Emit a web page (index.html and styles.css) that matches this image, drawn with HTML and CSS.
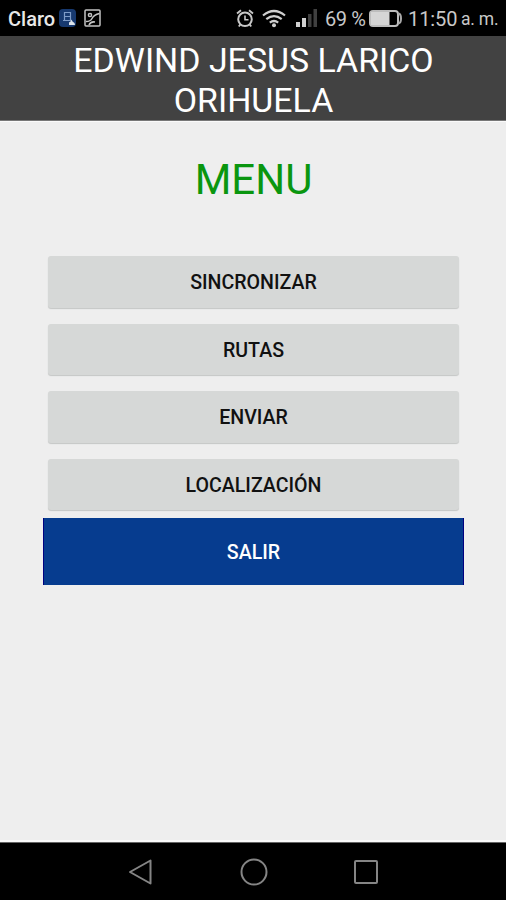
FILE: index.html
```html
<!DOCTYPE html>
<html lang="es">
<head>
<meta charset="utf-8">
<title>Menu</title>
<link rel="stylesheet" href="styles.css">
</head>
<body>
<div class="status">
  <span class="carrier">Claro</span>
  <svg class="app" width="17" height="18" viewBox="0 0 17 18"><rect width="17" height="18" rx="4" fill="#17396f"/><path d="M5.500 3.500h6v8h-6zM5.500 7.500h6M4 11.500h6" fill="none" stroke="#7f9cc8" stroke-width="1.200"/><path d="M10 16v-2.500l1.500-1 1-2 1 2 2 1.500.5 2z" fill="#dce3ea"/></svg>
  <svg class="photo" width="17" height="18" viewBox="0 0 17 18" fill="none" stroke="#c4c4c4" stroke-width="1.500"><rect x="1" y="1" width="15" height="16" rx="1"/><circle cx="6" cy="6" r="1.600"/><path d="M2 12.500C5 12.500 7 11.500 8 9.500S11 5.500 15.500 4.500M5 16c1-2.500 3-3.500 6-3"/></svg>
  <span class="space"></span>
  <svg class="alarm" width="18" height="19" viewBox="0 0 18 19" fill="none" stroke="#c8c8c8"><circle cx="9" cy="10.300" r="6.800" stroke-width="2"/><path d="M9 6.500v4.300h3.500" stroke-width="1.600"/><path d="M1 4.500 5 1.300M13 1.300l4 3.200M4.300 15.500l-1.500 2M13.700 15.500l1.500 2" stroke-width="1.900"/></svg>
  <svg class="wifi" width="24" height="19" viewBox="0 0 24 19" fill="none" stroke="#cfcfcf" stroke-width="2.200"><path d="M1 6.500Q12-2.500 23 6.500M4.300 10.200q7.700-6.200 15.400 0M7.800 13.600q4.200-3.200 8.400 0"/><circle cx="12" cy="16.300" r="2" fill="#cfcfcf" stroke="none"/></svg>
  <svg class="signal" width="22" height="19" viewBox="0 0 22 19"><path d="M0 13h4v5H0zM6 9h4v9H6z" fill="#d0d0d0"/><path d="M12 5h3.500v13H12zM17.500 0H21v18h-3.500z" fill="#404040"/></svg>
  <span class="percent">69 %</span>
  <svg class="battery" width="33" height="17" viewBox="0 0 33 17"><rect x="1" y="1" width="28" height="15" rx="3" fill="none" stroke="#bdbdbd" stroke-width="2"/><path d="M2 2h18.500v13H2z" fill="#d5d5d5"/><path d="M29.500 3.500q2.500.5 2.500 5t-2.500 5" fill="none" stroke="#a8a8a8" stroke-width="2"/></svg>
  <span class="time">11:50</span><span class="ampm">a. m.</span>
</div>
<header class="title">EDWIND JESUS LARICO<br>ORIHUELA</header>
<main class="content">
  <h1 class="heading">MENU</h1>
  <div class="actions">
    <button class="btn">SINCRONIZAR</button>
    <button class="btn">RUTAS</button>
    <button class="btn">ENVIAR</button>
    <button class="btn">LOCALIZACIÓN</button>
  </div>
  <button class="exit">SALIR</button>
</main>
<nav class="nav">
  <svg width="28" height="28" viewBox="0 0 28 28"><path d="M3 14 23.500 2.500v23z"/></svg>
  <svg width="28" height="28" viewBox="0 0 28 28"><circle cx="14" cy="14" r="12.500"/></svg>
  <svg width="28" height="28" viewBox="0 0 28 28"><rect x="3" y="3" width="22" height="22" rx="1"/></svg>
</nav>
</body>
</html>
```
FILE: styles.css
```css
* { box-sizing: border-box; }
body {
  margin: 0;
  width: 506px;
  height: 900px;
  display: flex;
  flex-direction: column;
  overflow: hidden;
  background: #eee;
  font-family: Roboto, "Liberation Sans", sans-serif;
}
.status {
  height: 36px;
  flex: none;
  display: flex;
  align-items: center;
  padding: 0 8px;
  background: #000;
  color: #c8c8c8;
  font-size: 20px;
  line-height: 24px;
  white-space: nowrap;
}
.status svg { flex: none; display: block; }
.carrier { width: 51px; padding-top: 2px; color: #e8e8e8; font-weight: 500; }
.photo { margin-left: 8px; }
.space { flex: 1; }
.alarm { margin-right: 8px; }
.wifi { margin-right: 10px; }
.signal { margin-right: 7px; }
.percent { width: 44px; padding-top: 2px; letter-spacing: -.4px; }
.battery { margin-right: 6px; }
.time { width: 49px; padding-top: 2px; letter-spacing: -.1px; }
.ampm { width: 37px; margin-left: 4px; padding-top: 2px; font-size: 17.500px; letter-spacing: -.2px; }
.title {
  height: 85px;
  flex: none;
  padding: 5px 0 0 1px;
  background: #424242;
  border-bottom: 1px solid #777;
  color: #fff;
  font-size: 33.900px;
  line-height: 40px;
  text-align: center;
}
.content {
  flex: 1;
  padding: 33px 42px 0 43px;
  border-top: 1px solid #fafafa;
  border-bottom: 2px solid #fafafa;
}
.heading {
  margin: 0;
  height: 101px;
  color: #0a960f;
  font-size: 42px;
  font-weight: 400;
  line-height: 50px;
  text-align: center;
}
.actions {
  display: flex;
  flex-direction: column;
  gap: 16px;
  padding: 0 5px;
}
.btn, .exit {
  display: block;
  width: 100%;
  padding: 3px 0 0;
  border: 0;
  font: 500 19.600px/24px Roboto, "Liberation Sans", sans-serif;
  text-align: center;
}
.btn {
  height: 51.500px;
  border-radius: 3px;
  background: #d6d8d7;
  box-shadow: 0 1px 1px #c4c6c5;
  color: #111;
}
.exit {
  height: 67px;
  margin-top: 8px;
  border: solid #000080;
  border-width: 0 1px;
  background: #063c8f;
  color: #fff;
}
.nav {
  height: 58px;
  flex: none;
  display: flex;
  justify-content: center;
  gap: 84.500px;
  padding: 14.500px 0 0 1px;
  border-top: 1px solid #666;
  background: #000;
}
.nav svg { fill: none; stroke: #858585; stroke-width: 2; stroke-linejoin: round; }
```
